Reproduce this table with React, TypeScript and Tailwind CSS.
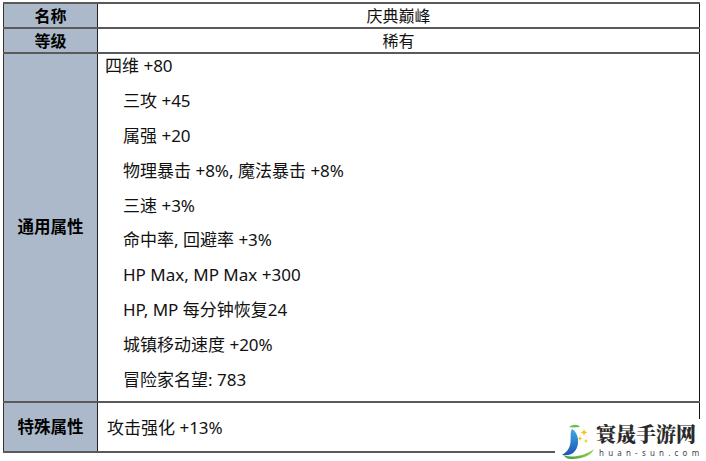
import React from "react";

const font = { fontFamily: '"Noto Sans", "Noto Sans CJK SC", sans-serif' };

const lines: { t: string; indent: boolean }[] = [
  { t: "四维 +80", indent: false },
  { t: "三攻 +45", indent: true },
  { t: "属强 +20", indent: true },
  { t: "物理暴击 +8%, 魔法暴击 +8%", indent: true },
  { t: "三速 +3%", indent: true },
  { t: "命中率, 回避率 +3%", indent: true },
  { t: "HP Max, MP Max +300", indent: true },
  { t: "HP, MP 每分钟恢复24", indent: true },
  { t: "城镇移动速度 +20%", indent: true },
  { t: "冒险家名望: 783", indent: true },
];

function Logo() {
  return (
    <div className="absolute left-[555px] top-[419px] w-[151px] h-[42px] bg-white flex items-start">
      <svg width="38" height="38" viewBox="0 0 38 38" className="ml-[3px] mt-[3px]">
        <defs>
          <linearGradient id="bl" x1="0" y1="0" x2="0" y2="1">
            <stop offset="0" stopColor="#41a9ea" />
            <stop offset="1" stopColor="#1a55b0" />
          </linearGradient>
          <linearGradient id="gr" x1="0" y1="0" x2="1" y2="0">
            <stop offset="0" stopColor="#2f9a3a" />
            <stop offset="1" stopColor="#9bd656" />
          </linearGradient>
        </defs>
        <path d="M11 5 C15 2 20 2 22 5 C18 5.5 14 5.5 11 5 Z" fill="#6cc04a" />
        <path d="M14 7 C21 11 22 23 17 29 C14 33 9 34 4 33 C9 30 12 26 12.5 20 C13 14 12 10 14 7 Z" fill="url(#bl)" />
        <path d="M6 33.5 C14 36 27 34 36 27 C34 33 24 37.5 13 37 C10 37 7.5 36 6 33.5 Z" fill="url(#gr)" />
        <path d="M26 7 l1 2.6 l2.6 0.6 l-2.6 1 l-1 2.6 l-1 -2.6 l-2.6 -1 l2.6 -0.6 Z" fill="#f4c20d" />
        <path d="M22 14 l0.8 1.9 l1.9 0.5 l-1.9 0.7 l-0.8 1.9 l-0.8 -1.9 l-1.9 -0.7 l1.9 -0.5 Z" fill="#f4c20d" />
        <path d="M28 17 l0.7 1.5 l1.5 0.4 l-1.5 0.5 l-0.7 1.5 l-0.7 -1.5 l-1.5 -0.5 l1.5 -0.4 Z" fill="#f4c20d" />
      </svg>
      <div className="flex flex-col ml-[0px] mt-[4px]">
        <div
          className="text-[20px] leading-[22px] font-black text-[#2a2a2a] whitespace-nowrap"
          style={{ fontFamily: '"Noto Serif CJK SC", "Noto Sans CJK SC", serif' }}
        >
          寰晟手游网
        </div>
        <div className="text-[8px] leading-[10px] text-[#444] tracking-[4.2px] whitespace-nowrap mt-[3px] ml-[3px]" style={font}>
          huan-sun.com
        </div>
      </div>
    </div>
  );
}

export default function App() {
  return (
    <div className="relative w-[706px] h-[461px] bg-white overflow-hidden text-[#111]" style={font}>
      <div className="absolute left-[3px] top-[2px] w-[697px] border-t-2 border-[#5a5a5a]">
        <div className="flex h-[25px] border-b-2 border-[#5a5a5a]">
          <div className="w-[95px] bg-[#acb9ca] border-l border-r border-l-[#333] border-r-[#222] flex items-center justify-center text-[16px] font-bold leading-none text-black">
            名称
          </div>
          <div className="flex-1 border-r border-[#111] flex items-center justify-center text-[16px] leading-none">
            庆典巅峰
          </div>
        </div>
        <div className="flex h-[25px] border-b-2 border-[#5a5a5a]">
          <div className="w-[95px] bg-[#acb9ca] border-l border-r border-l-[#333] border-r-[#222] flex items-center justify-center text-[16px] font-bold leading-none text-black">
            等级
          </div>
          <div className="flex-1 border-r border-[#111] flex items-center justify-center text-[16px] leading-none">
            稀有
          </div>
        </div>
        <div className="flex h-[349px] border-b-2 border-[#5a5a5a]">
          <div className="w-[95px] bg-[#acb9ca] border-l border-r border-l-[#333] border-r-[#222] flex items-center justify-center text-[16.5px] font-bold leading-none text-black">
            通用属性
          </div>
          <div className="flex-1 border-r border-[#111] flex flex-col gap-[14.9px] pt-[2px] pl-[7px] text-[17px]">
            {lines.map((l) => (
              <div key={l.t} className={"h-[20px] leading-[20px] whitespace-nowrap " + (l.indent ? "pl-[18px]" : "")}>
                {l.t}
              </div>
            ))}
          </div>
        </div>
        <div className="flex h-[50px] border-b-2 border-[#5a5a5a]">
          <div className="w-[95px] bg-[#acb9ca] border-l border-r border-l-[#333] border-r-[#222] flex items-center justify-center text-[16.5px] font-bold leading-none text-black">
            特殊属性
          </div>
          <div className="flex-1 border-r border-[#111] flex items-center pl-[9px] text-[17px] leading-none">
            攻击强化 +13%
          </div>
        </div>
      </div>
      <Logo />
    </div>
  );
}
